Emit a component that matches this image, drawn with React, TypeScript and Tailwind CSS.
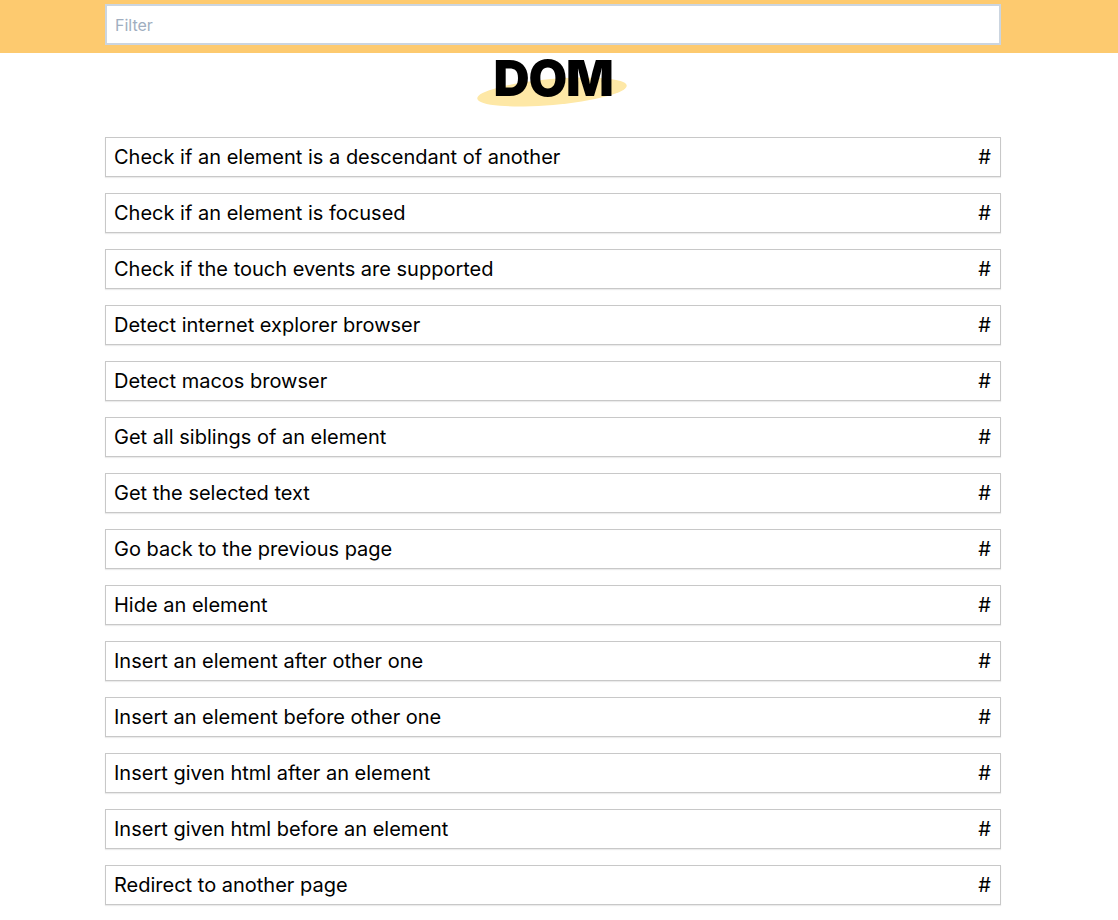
import { useState } from "react";

const items = [
  "Check if an element is a descendant of another",
  "Check if an element is focused",
  "Check if the touch events are supported",
  "Detect internet explorer browser",
  "Detect macos browser",
  "Get all siblings of an element",
  "Get the selected text",
  "Go back to the previous page",
  "Hide an element",
  "Insert an element after other one",
  "Insert an element before other one",
  "Insert given html after an element",
  "Insert given html before an element",
  "Redirect to another page",
];

export default function App() {
  const [filter, setFilter] = useState("");
  const shown = items.filter((t) => t.toLowerCase().includes(filter.toLowerCase()));

  return (
    <div className="min-h-screen bg-white font-['Inter',sans-serif] text-black">
      {/* Barra de filtro */}
      <div className="bg-[#fdca6f] pt-1 pb-2">
        <div className="ml-[105px] w-[896px]">
          <input
            type="text"
            placeholder="Filter"
            value={filter}
            onChange={(e) => setFilter(e.target.value)}
            className="block h-[41px] w-full border-2 border-[#cbd5e0] bg-white px-2 text-base text-gray-700 placeholder:text-[#a0aec0] outline-none"
          />
        </div>
      </div>

      {/* Titulo */}
      <div className="ml-[105px] flex w-[896px] justify-center">
        <div className="relative">
          <div className="absolute left-[-17px] top-[26px] h-[26px] w-[150px] -rotate-[5deg] rounded-[50%] bg-[#fee8a6]" />
          <h1 className="relative text-[50px] font-black leading-[50px] tracking-tight">DOM</h1>
        </div>
      </div>

      {/* Lista */}
      <div className="ml-[105px] mt-[34px] flex w-[896px] flex-col gap-4 pb-3">
        {shown.map((t) => (
          <div
            key={t}
            className="flex h-10 items-center justify-between border border-[#c8c8c8] px-2 text-xl shadow-[0_1px_1px_rgba(0,0,0,0.08)]"
          >
            <span>{t}</span>
            <span className="pr-px">#</span>
          </div>
        ))}
      </div>
    </div>
  );
}
